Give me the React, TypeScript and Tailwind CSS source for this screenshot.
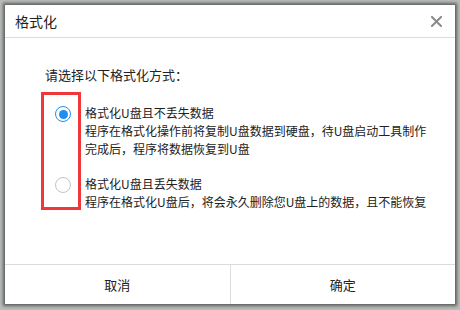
import React from "react";

const font = { fontFamily: '"Microsoft YaHei", "Noto Sans CJK SC", sans-serif' };

function Radio({ checked }: { checked?: boolean }) {
  return checked ? (
    <div className="w-4 h-4 rounded-full border-[1.5px] border-[#1e8ff0] flex items-center justify-center bg-white">
      <div className="w-[9px] h-[9px] rounded-full bg-[#1e8ff0]" />
    </div>
  ) : (
    <div className="w-4 h-4 rounded-full border border-[#c4c4c4] bg-white" />
  );
}

export default function App() {
  return (
    <div className="w-[460px] h-[310px] bg-[#b9bcb9] overflow-hidden" style={font}>
      <div className="ml-[5px] mt-[5px] w-[450px] h-[299px] bg-white flex flex-col shadow-[0_0_3px_2px_rgba(60,66,60,0.75)] text-[#222]">
        {/* header */}
        <div className="h-[33px] flex items-center justify-between pl-[10px] pr-[13px] border-b border-[#dcdcdc]">
          <span className="text-[14px] leading-none">格式化</span>
          <svg width="11" height="11" viewBox="0 0 11 11">
            <path d="M1 1 L10 10 M10 1 L1 10" stroke="#8a8a8a" strokeWidth="2" strokeLinecap="square" />
          </svg>
        </div>

        {/* body */}
        <div className="flex-1 pt-[28px] pl-[40px] text-[13px]">
          <div className="leading-[18px]">请选择以下格式化方式：</div>
          <div className="flex mt-[8px] -ml-[4px]">
            <div className="w-[40px] h-[118px] border-[3px] border-[#f0383a] pl-[11px] pt-[11px] flex flex-col">
              <Radio checked />
              <div className="mt-[55px]">
                <Radio />
              </div>
            </div>
            <div className="pl-[4px] pt-[12px] leading-[18px] text-[12px] whitespace-nowrap">
              <div>格式化U盘且不丢失数据</div>
              <div>程序在格式化操作前将复制U盘数据到硬盘，待U盘启动工具制作</div>
              <div>完成后，程序将数据恢复到U盘</div>
              <div className="mt-[17px]">格式化U盘且丢失数据</div>
              <div>程序在格式化U盘后，将会永久删除您U盘上的数据，且不能恢复</div>
            </div>
          </div>
        </div>

        {/* footer */}
        <div className="h-[40px] border-t border-[#dcdcdc] flex text-[13px]">
          <div className="flex-1 flex items-center justify-center border-r border-[#dcdcdc]">取消</div>
          <div className="flex-1 flex items-center justify-center">确定</div>
        </div>
      </div>
    </div>
  );
}
